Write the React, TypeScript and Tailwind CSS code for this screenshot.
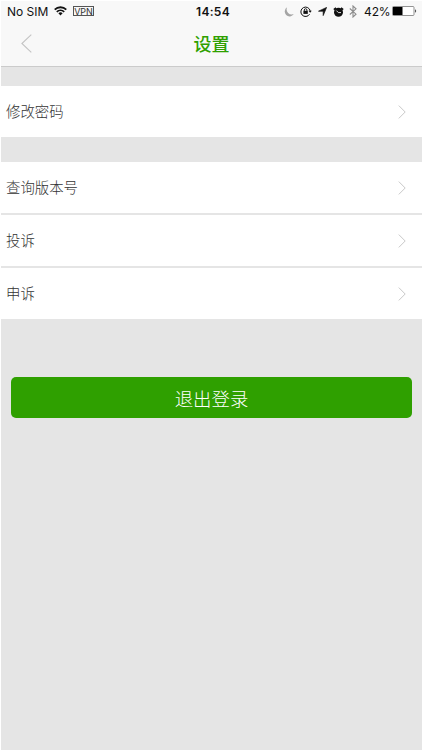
import React from "react";

const groups = [["修改密码"], ["查询版本号", "投诉", "申诉"]];

const StatusBar = () => (
  <div className="relative flex h-[21px] items-center justify-between pl-[6px] pr-[5px] text-[12px] leading-[21px] text-[#111] font-['Inter','Liberation_Sans',sans-serif]">
    <div className="flex items-center">
      <span className="w-[42px] whitespace-nowrap text-[12px]">No SIM</span>
      {/* Wifi */}
      <svg className="ml-[5px] mb-px h-[10px] w-[13px]" viewBox="0 0 13 10" fill="none" stroke="#111" strokeWidth="1.8">
        <path d="M0.7 3.6a8.3 8.3 0 0 1 11.6 0" />
        <path d="M2.8 5.9a5.3 5.3 0 0 1 7.4 0" />
        <path d="M6.5 9.4 4.4 7.3a3 3 0 0 1 4.2 0z" fill="#111" stroke="none" />
      </svg>
      <span className="ml-[6px] mb-px flex h-[10px] w-[21px] items-center justify-center border border-[#555] text-[9px] leading-none text-[#333]">
        VPN
      </span>
    </div>

    <span className="absolute inset-x-0 pl-[3px] text-center text-[12px] font-semibold tracking-[0.3px]">14:54</span>

    <div className="flex items-center">
      {/* Moon */}
      <svg className="mr-[6px] h-[10px] w-[10px]" viewBox="0 0 9 9" fill="#a5a5a5">
        <path d="M2.8 0.3a4.4 4.4 0 1 0 6 6.1A4.6 4.6 0 0 1 2.8 0.3z" />
      </svg>
      {/* Rotation lock */}
      <svg className="h-[11px] w-[12px]" viewBox="0 0 12 11" fill="none" stroke="#111">
        <path d="M9.6 8.2A4.7 4.7 0 1 1 10.2 5" strokeWidth="1" />
        <path d="M8.5 4.7h3.3l-1.7 2.1z" fill="#111" stroke="none" />
        <path d="M4.3 5V4a1.3 1.3 0 0 1 2.6 0v1" strokeWidth="0.9" />
        <path d="M3.4 4.8h4.4v3.1H3.4z" fill="#111" stroke="none" />
      </svg>
      {/* Location */}
      <svg className="ml-[6px] h-[9px] w-[9px]" viewBox="0 0 9 9" fill="#111" stroke="#111" strokeWidth="0.7">
        <path d="M8.6 0.4 5.2 8.6V4.2H0.5z" />
      </svg>
      {/* Alarm */}
      <svg className="ml-[6px] h-[10px] w-[11px]" viewBox="0 0 11 10">
        <circle cx="5.5" cy="5.3" r="4.5" fill="#111" />
        <path d="M0.8 2.6 3 0.8M10.2 2.6 8 0.8" stroke="#111" strokeWidth="1.5" />
        <path d="M3.4 3.6 5.4 5.6H8" fill="none" stroke="#f8f8f8" strokeWidth="0.9" />
      </svg>
      {/* Bluetooth */}
      <svg className="ml-[5px] h-[13px] w-[8px]" viewBox="0 0 8 13" fill="none" stroke="#8c8c8c" strokeWidth="1.1">
        <path d="M0.8 3.5 7 9.2 4 12V1l3 2.8L0.8 9.5" />
      </svg>
      <span className="ml-[7px] w-[25px] whitespace-nowrap text-[12px] tracking-[-0.1px]">42%</span>
      {/* Battery */}
      <svg className="ml-[3px] mb-px h-[10px] w-[25px]" viewBox="0 0 25 10">
        <rect x="0.5" y="0.5" width="21.5" height="9" rx="1" fill="#fff" stroke="#777" strokeWidth="0.8" />
        <rect x="1" y="1" width="9.5" height="8" fill="#000" />
        <path d="M23 3.3a1.8 1.8 0 0 1 0 3.4z" fill="#555" />
      </svg>
    </div>
  </div>
);

const Row = ({ label }: { label: string }) => (
  <button className="flex h-[51px] w-full items-center justify-between bg-white pl-[5px] pr-[16px] text-left text-[14.4px] text-[#333]">
    <span className="pb-px font-light">{label}</span>
    <svg className="h-[14px] w-[8px]" viewBox="0 0 8 14" fill="none" stroke="#c8c8c8" strokeWidth="1">
      <path d="M0.8 0.6 7.2 7 0.8 13.4" />
    </svg>
  </button>
);

export default function App() {
  return (
    <div className="h-[750px] w-[422px] overflow-hidden border-l border-t border-white bg-[#e5e5e5] font-['Noto_Sans_CJK_SC',sans-serif]">
      <header className="h-[66px] border-b border-[#cbcbcb] bg-[#f8f8f8]">
        <StatusBar />
        <div className="relative flex h-[43px] items-center pl-[20px]">
          <svg className="h-[19px] w-[11px]" viewBox="0 0 11 19" fill="none" stroke="#c4c4c4" strokeWidth="1.1">
            <path d="M10.3 0.6 0.9 9.5l9.4 8.9" />
          </svg>
          <h1 className="absolute inset-x-0 pb-[2px] text-center text-[18px] font-medium leading-[40px] text-[#2fa000]">设置</h1>
        </div>
      </header>

      <main className="flex flex-col gap-[25px] pt-[19px]">
        {groups.map((rows) => (
          <section key={rows[0]} className="flex flex-col gap-[2px]">
            {rows.map((label) => (
              <Row key={label} label={label} />
            ))}
          </section>
        ))}
      </main>

      <div className="pl-[10px] pr-[10px] pt-[58px]">
        <button className="h-[41px] w-full rounded-[5px] bg-[#2fa000] pt-px text-[18.4px] font-light leading-[40px] text-white">
          退出登录
        </button>
      </div>
    </div>
  );
}
